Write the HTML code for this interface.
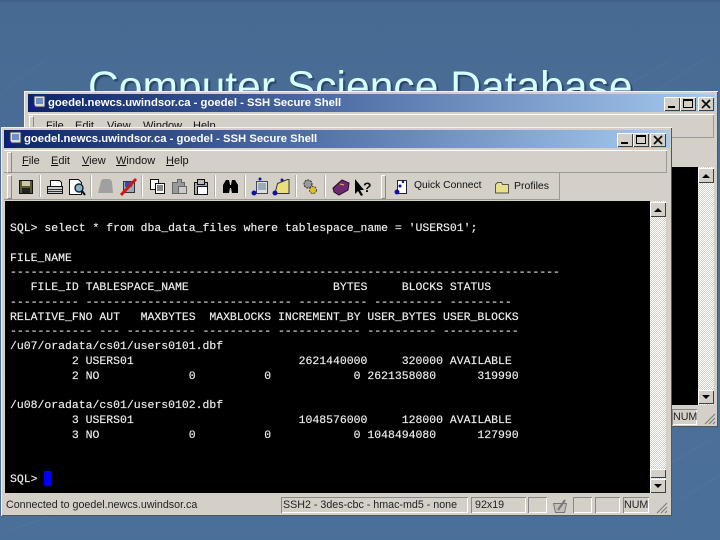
<!DOCTYPE html>
<html><head><meta charset="utf-8"><style>
html,body{margin:0;padding:0;width:720px;height:540px;overflow:hidden}
body{position:relative;background:linear-gradient(180deg,#466a92 0%,#4c7099 50%,#4a6f98 100%);font-family:"Liberation Sans",sans-serif}
.a{position:absolute}
.win{background:#d4d0c8;box-shadow:inset 1px 1px 0 #f4f2ee,inset -1px -1px 0 #555,inset 2px 2px 0 #d4d0c8}
.tb{background:linear-gradient(90deg,#0a246a,#a6caf0)}
.tt{color:#fff;font-weight:bold;font-size:11.3px;white-space:nowrap;line-height:18px}
.btn{width:16px;height:14px;background:#d4d0c8;box-shadow:inset 1px 1px 0 #fff,inset -1px -1px 0 #404040}
.mn{font-size:11px;color:#111;white-space:nowrap}
.sep{width:1px;height:22px;background:#b4b0a8;border-right:1px solid #fff}
.sunk{box-shadow:inset 1px 1px 0 #888,inset -1px -1px 0 #fff}
.grip{width:3px;border:1px solid;border-color:#fff #888 #888 #fff}
.chk{background:repeating-conic-gradient(#fff 0 25%,#d4d0c8 0 50%) 0 0/2px 2px}
pre{margin:0;font-family:"Liberation Mono",monospace;font-size:11.46px;line-height:14.75px;color:#f2f2f2;-webkit-text-stroke:.2px #ddd}
.st{font-size:10.7px;color:#222;white-space:nowrap;line-height:16px}
</style></head><body>
<svg class="a" style="left:0;top:0" width="720" height="540"><g stroke="#5c80a8" stroke-width="1" opacity=".35" fill="none"><path d="M620 90l50-30M650 95l60-40M660 470l50-30M680 500l40-25M10 530l60-20M5 90l40-30"/></g><rect x="0" y="0" width="720" height="2" fill="#3e6089"/></svg>

<div class="a" style="left:88px;top:59px;font-size:42.6px;line-height:56px;color:#d8ffff;white-space:nowrap;text-shadow:2px 2px 1px #2b4468">Computer Science Database</div>

<!-- back window -->
<div class="a win" style="left:24px;top:91px;width:694px;height:336px"></div>
<div class="a tb" style="left:28px;top:94px;width:687px;height:18px"></div>
<svg class="a" style="left:30px;top:95px" width="16" height="16"><rect x="4" y="1" width="11" height="11" fill="#ddd" stroke="#334"/><rect x="6" y="3" width="7" height="6" fill="#6d8fc4"/><circle cx="3" cy="12" r="2.5" fill="#1a1aa0"/></svg>
<div class="a tt" style="left:48px;top:94px">goedel.newcs.uwindsor.ca - goedel - SSH Secure Shell</div>
<div class="a btn" style="left:664px;top:97px"><div class="a" style="left:4px;top:9px;width:7px;height:2px;background:#000"></div></div>
<div class="a btn" style="left:680px;top:97px"><div class="a" style="left:3px;top:2px;width:10px;height:9px;border:1px solid #000;border-top-width:2px;box-sizing:border-box"></div></div>
<div class="a btn" style="left:698px;top:97px"><svg width="16" height="14"><path d="M4 3l8 8M12 3l-8 8" stroke="#000" stroke-width="1.6"/></svg></div>
<div class="a" style="left:28px;top:114px;width:686px;height:24px;box-shadow:inset 0 1px 0 #fff,inset -1px -1px 0 #999"></div>
<div class="a grip" style="left:29px;top:116px;height:20px"></div>
<div class="a mn" style="left:46px;top:120px">File</div>
<div class="a mn" style="left:75px;top:120px">Edit</div>
<div class="a mn" style="left:107px;top:120px">View</div>
<div class="a mn" style="left:143px;top:120px">Window</div>
<div class="a mn" style="left:193px;top:120px">Help</div>
<div class="a" style="left:672px;top:167px;width:26px;height:238px;background:#000"></div>
<div class="a chk" style="left:698px;top:167px;width:16px;height:238px"></div>
<div class="a btn" style="left:698px;top:168px;height:15px"><svg width="16" height="15"><path d="M4 10h8L8 6z" fill="#000"/></svg></div>
<div class="a btn" style="left:698px;top:390px"><svg width="16" height="14"><path d="M4 5h8L8 9z" fill="#000"/></svg></div>
<div class="a st sunk" style="left:672px;top:409px;width:25px;height:16px;text-indent:1px">NUM</div>
<svg class="a" style="left:703px;top:412px" width="13" height="13"><path d="M2 12L12 2M6 12L12 6M10 12L12 10" stroke="#777" fill="none"/></svg>

<!-- front window -->
<div class="a win" style="left:1px;top:127px;width:671px;height:389px"></div>
<div class="a tb" style="left:4px;top:130px;width:666px;height:18px"></div>
<svg class="a" style="left:6px;top:131px" width="16" height="16"><rect x="4" y="1" width="11" height="11" fill="#ddd" stroke="#334"/><rect x="6" y="3" width="7" height="6" fill="#6d8fc4"/><circle cx="3" cy="12" r="2.5" fill="#1a1aa0"/></svg>
<div class="a tt" style="left:24px;top:130px">goedel.newcs.uwindsor.ca - goedel - SSH Secure Shell</div>
<div class="a btn" style="left:617px;top:133px"><div class="a" style="left:4px;top:9px;width:7px;height:2px;background:#000"></div></div>
<div class="a btn" style="left:633px;top:133px"><div class="a" style="left:3px;top:2px;width:10px;height:9px;border:1px solid #000;border-top-width:2px;box-sizing:border-box"></div></div>
<div class="a btn" style="left:650px;top:133px"><svg width="16" height="14"><path d="M4 3l8 8M12 3l-8 8" stroke="#000" stroke-width="1.6"/></svg></div>

<div class="a" style="left:4px;top:150px;width:663px;height:23px;box-shadow:inset 0 1px 0 #fff,inset -1px -1px 0 #999"></div>
<div class="a grip" style="left:7px;top:152px;height:19px"></div>
<div class="a mn" style="left:22px;top:155px"><u>F</u>ile</div>
<div class="a mn" style="left:51px;top:155px"><u>E</u>dit</div>
<div class="a mn" style="left:82px;top:155px"><u>V</u>iew</div>
<div class="a mn" style="left:116px;top:155px"><u>W</u>indow</div>
<div class="a mn" style="left:166px;top:155px"><u>H</u>elp</div>

<div class="a" style="left:4px;top:173px;width:556px;height:27px;box-shadow:inset -1px -1px 0 #999"></div>
<div class="a grip" style="left:7px;top:175px;height:22px"></div>
<div class="a grip" style="left:381px;top:175px;height:22px"></div>
<div class="a sep" style="left:39px;top:175px"></div>
<div class="a sep" style="left:90px;top:175px"></div>
<div class="a sep" style="left:141px;top:175px"></div>
<div class="a sep" style="left:214px;top:175px"></div>
<div class="a sep" style="left:244px;top:175px"></div>
<div class="a sep" style="left:295px;top:175px"></div>
<div class="a sep" style="left:324px;top:175px"></div>
<svg class="a" style="left:0;top:173px" width="420" height="28">
<rect x="19.5" y="7.5" width="13" height="13" fill="#5b5b30" stroke="#111"/><rect x="22" y="8" width="8" height="5" fill="#c8c8a8"/><rect x="22" y="15" width="8" height="5" fill="#222"/>
<path d="M47.5 13.5h15v7h-15z" fill="#ccc" stroke="#111"/><path d="M50.5 7.5h9l2 2v4h-11z" fill="#fff" stroke="#111"/><path d="M48 16.5h14M48 18.5h14" stroke="#333"/>
<path d="M69.5 6.5h9l3 3v12h-12z" fill="#fff" stroke="#111"/><circle cx="79" cy="15" r="4" fill="#8ab4cc" stroke="#123" stroke-width="1.4"/><path d="M82 18l3 4" stroke="#111" stroke-width="2"/>
<path d="M98 20l3-12q1-2 3-2h4q3 0 4 3l1 11z" fill="#a0a0a0"/>
<rect x="123.5" y="8.5" width="11" height="11" fill="#9ab" stroke="#334"/><rect x="125" y="9" width="7" height="5" fill="#2a4ac0"/><path d="M121 22l15-16" stroke="#d01818" stroke-width="3"/>
<path d="M150.5 6.5h8v10h-8z" fill="#fff" stroke="#111"/><path d="M155.5 10.5h9v10h-9z" fill="#fff" stroke="#111"/><path d="M157 13h6M157 15h6M157 17h6" stroke="#111"/>
<path d="M172.5 9.5h5v-3h4v3h3v11h-12z" fill="#999" stroke="#666"/><rect x="178.5" y="13.5" width="8" height="7" fill="#ccc" stroke="#666"/>
<path d="M194.5 9.5h13v12h-13z" fill="#aaa" stroke="#111"/><rect x="197.5" y="6.5" width="7" height="5" fill="#bbb" stroke="#111"/><rect x="197.5" y="13.5" width="10" height="8" fill="#fff" stroke="#113"/>
<path d="M223 20v-8l3-5h3l1 5h1l1-5h3l3 5v8l-6 0-1-5h-1l-1 5z" fill="#000"/>
<rect x="256.5" y="8.5" width="11" height="12" fill="#ddd" stroke="#445"/><rect x="258" y="10" width="8" height="7" fill="#9ab"/><circle cx="254" cy="20" r="2.5" fill="#11a"/><circle cx="260" cy="6" r="1.5" fill="#11a"/>
<path d="M277.5 10.5l10-4h1.5v14h-14z" fill="#eadf7a" stroke="#334"/><circle cx="275" cy="20" r="2.5" fill="#11a"/><circle cx="282" cy="7" r="1.5" fill="#11a"/>
<circle cx="308" cy="11" r="4" fill="#999" stroke="#222" stroke-dasharray="2 1"/><circle cx="313" cy="17" r="3.5" fill="#e0c020" stroke="#444" stroke-dasharray="2 1"/>
<path d="M333 15l9-8 7 3-1 7-9 5-5-3z" fill="#702870" stroke="#201030"/><path d="M340 11l4 1" stroke="#e8c040"/>
<path d="M355 6v15l3-3 3 5 2-1-3-5h4z" fill="#000"/>
<text x="363" y="19" font-size="14" font-family="Liberation Sans" font-weight="bold" fill="#111">?</text>
<path d="M397.5 7.5h9v13h-9z" fill="#fff" stroke="#223"/><circle cx="397" cy="19" r="2.5" fill="#11a"/><circle cx="400" cy="13" r="1.5" fill="#11a"/><circle cx="403" cy="9" r="1.2" fill="#11a"/>
</svg>
<div class="a mn" style="left:414px;top:180px;font-size:10.3px">Quick Connect</div>
<svg class="a" style="left:494px;top:180px" width="16" height="14"><path d="M1.500 4.500l2-2h4l1 2h6v8.500h-13z" fill="#e8e08a" stroke="#555"/></svg>
<div class="a mn" style="left:514px;top:180px;font-size:10.5px">Profiles</div>

<!-- terminal -->
<div class="a" style="left:5px;top:201px;width:645px;height:292px;background:#000"></div>
<pre class="a" style="left:10px;top:222px">SQL&gt; select * from dba_data_files where tablespace_name = 'USERS01';

FILE_NAME
--------------------------------------------------------------------------------
   FILE_ID TABLESPACE_NAME                     BYTES     BLOCKS STATUS
---------- ------------------------------ ---------- ---------- ---------
RELATIVE_FNO AUT   MAXBYTES  MAXBLOCKS INCREMENT_BY USER_BYTES USER_BLOCKS
------------ --- ---------- ---------- ------------ ---------- -----------
/u07/oradata/cs01/users0101.dbf
         2 USERS01                        2621440000     320000 AVAILABLE
         2 NO             0          0            0 2621358080      319990

/u08/oradata/cs01/users0102.dbf
         3 USERS01                        1048576000     128000 AVAILABLE
         3 NO             0          0            0 1048494080      127990


SQL&gt; </pre>
<div class="a" style="left:44px;top:471px;width:7px;height:15px;background:#0000f0"></div>

<!-- scrollbar -->
<div class="a chk" style="left:650px;top:201px;width:16px;height:292px"></div>
<div class="a btn" style="left:650px;top:202px;height:15px"><svg width="16" height="15"><path d="M4 10h8L8 6z" fill="#000"/></svg></div>
<div class="a btn" style="left:650px;top:469px;height:9px"></div>
<div class="a btn" style="left:650px;top:479px"><svg width="16" height="14"><path d="M4 5h8L8 9z" fill="#000"/></svg></div>

<!-- status -->
<div class="a st" style="left:6px;top:497px">Connected to goedel.newcs.uwindsor.ca</div>
<div class="a st sunk" style="left:281px;top:497px;width:185px;height:16px;padding-left:2px">SSH2 - 3des-cbc - hmac-md5 - none</div>
<div class="a st sunk" style="left:471px;top:497px;width:51px;height:16px;padding-left:4px">92x19</div>
<div class="a sunk" style="left:528px;top:497px;width:19px;height:16px"></div>
<svg class="a" style="left:551px;top:497px" width="18" height="16"><path d="M2.500 6.500h13l-2 9h-9z" fill="#c4c0b8" stroke="#777"/><path d="M7 13l7-10" stroke="#777" stroke-width="2"/></svg>
<div class="a sunk" style="left:573px;top:497px;width:19px;height:16px"></div>
<div class="a sunk" style="left:595px;top:497px;width:25px;height:16px"></div>
<div class="a st sunk" style="left:623px;top:497px;width:26px;height:16px;text-indent:1px">NUM</div>
<svg class="a" style="left:655px;top:501px" width="13" height="13"><path d="M2 12L12 2M6 12L12 6M10 12L12 10" stroke="#777" fill="none"/></svg>
</body></html>
